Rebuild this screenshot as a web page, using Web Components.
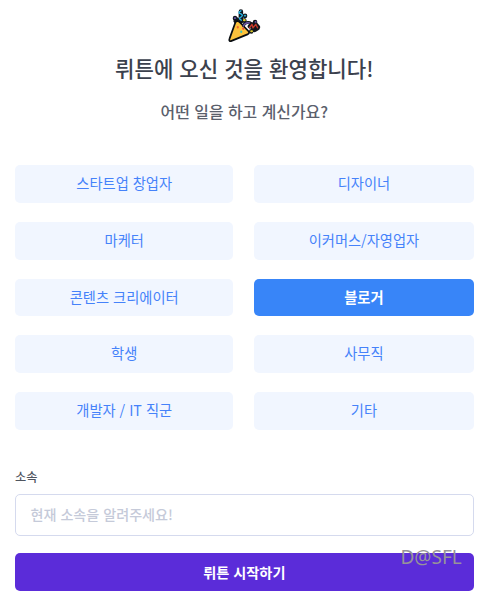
<!DOCTYPE html>
<html lang="ko">
<head>
<meta charset="utf-8">
<title>뤼튼</title>
<style>
  body {
    margin: 0;
    background: #fff;
    font-family: "Noto Sans CJK KR", "Noto Sans", sans-serif;
  }
</style>
</head>
<body>
<welcome-page>
  <party-icon slot="icon"></party-icon>
  <span slot="title">뤼튼에 오신 것을 환영합니다!</span>
  <span slot="question">어떤 일을 하고 계신가요?</span>
  <job-list>
    <job-option>스타트업 창업자</job-option>
    <job-option>디자이너</job-option>
    <job-option>마케터</job-option>
    <job-option>이커머스/자영업자</job-option>
    <job-option>콘텐츠 크리에이터</job-option>
    <job-option selected>블로거</job-option>
    <job-option>학생</job-option>
    <job-option>사무직</job-option>
    <job-option>개발자 / IT 직군</job-option>
    <job-option>기타</job-option>
  </job-list>
  <text-field hint="현재 소속을 알려주세요!">소속</text-field>
  <start-button>뤼튼 시작하기</start-button>
  <water-mark>D@SFL</water-mark>
</welcome-page>

<script>
class BaseElement extends HTMLElement {
  constructor() {
    super();
    const shadowRoot = this.attachShadow({mode: 'open'});
    shadowRoot.innerHTML = this.template;
  }
}

class WelcomePage extends BaseElement {
  get template() {
    return `<style>
      :host {
        display: flex;
        flex-direction: column;
        position: relative;
        box-sizing: border-box;
        height: 609px;
        padding: 7px 26.4px 0 15px;
      }
      header {
        display: flex;
        flex-direction: column;
        align-items: center;
        height: 158.3px;
      }
      h1, p {
        margin: 0;
        white-space: nowrap;
        font-weight: 500;
      }
      h1 {
        margin-top: 9px;
        font-size: 21.15px;
        line-height: 32px;
        color: #3b414d;
      }
      p {
        margin-top: 15px;
        font-size: 15.9px;
        line-height: 25px;
        color: #5a606c;
      }
    </style>
    <header>
      <slot name="icon"></slot>
      <h1><slot name="title"></slot></h1>
      <p><slot name="question"></slot></p>
    </header>
    <slot></slot>`;
  }
}
window.customElements.define('welcome-page', WelcomePage);

class PartyIcon extends BaseElement {
  get template() {
    return `<style>
      :host { display: block; width: 36px; height: 36px; }
      svg { display: block; }
    </style>
    <svg width="36" height="36" viewBox="34 22 104 104" fill="none" stroke-linecap="round" stroke-linejoin="round">
      <g stroke="#10161c" stroke-width="13">
        <path d="M60 54v1M77 35v28M89 47v1M87 61v1M65 58l-3 4"/>
        <path d="M103 78l5-6 4 10 7-10 7 8M118 65v1M107 92v1M125 83l-8 5"/>
      </g>
      <path d="M66 63c-3 0-4 2-5 4L44 114c-2 5 1 8 6 6l46-19c5-2 6-5 3-9L75 67c-3-3-6-5-9-4z" fill="#fdc23c" stroke="#090d12" stroke-width="5"/>
      <path d="M84 76c4-8 11-11 19-9" stroke="#10161c" stroke-width="8"/>
      <path d="M84 77c4-8 11-11 18-9" stroke="#6b57a5" stroke-width="4"/>
      <path d="M77 33c-8 4-7 7 0 9 6 3 5 6 0 9-6 2-5 6 1 9" stroke="#2bb8e6" stroke-width="4"/>
      <path d="M102 82l7-10 3 10 8-10 5 10" stroke="#c3392b" stroke-width="4"/>
      <path d="M59 54h2M119 65h1" stroke="#6554a8" stroke-width="5"/>
      <path d="M88 47h2" stroke="#2fa8c8" stroke-width="5"/>
      <path d="M86 60h2M107 92h2" stroke="#d9c92a" stroke-width="6"/>
      <path d="M68 80v1" stroke="#f0672e" stroke-width="6"/>
      <path d="M84 84v1" stroke="#e84d3c" stroke-width="6"/>
      <path d="M78 93v1" stroke="#43c7b5" stroke-width="6"/>
    </svg>`;
  }
}
window.customElements.define('party-icon', PartyIcon);

class JobList extends BaseElement {
  get template() {
    return `<style>
      :host {
        display: grid;
        grid-template-columns: 218.4px 1fr;
        grid-auto-rows: 37.7px;
        gap: 19px 20.8px;
      }
    </style>
    <slot></slot>`;
  }
}
window.customElements.define('job-list', JobList);

class JobOption extends BaseElement {
  get template() {
    return `<style>
      :host {
        display: flex;
        align-items: center;
        justify-content: center;
        box-sizing: border-box;
        padding-bottom: 2px;
        border-radius: 5px;
        background: #f1f6ff;
        color: #4582fa;
        font-size: 14.25px;
        line-height: 20px;
        cursor: pointer;
      }
      :host([selected]) {
        background: #3885f8;
        color: #fff;
        font-weight: 700;
      }
    </style>
    <slot></slot>`;
  }
}
window.customElements.define('job-option', JobOption);

class TextField extends BaseElement {
  get template() {
    return `<style>
      :host { display: block; margin-top: 38px; }
      label {
        display: block;
        font-size: 12.2px;
        line-height: 18px;
        font-weight: 500;
        color: #50555f;
      }
      .box {
        display: flex;
        align-items: center;
        box-sizing: border-box;
        height: 42px;
        margin-top: 8px;
        padding: 0 14.5px 1px;
        border: 1px solid #d5daee;
        border-radius: 5px;
        color: #c5cad9;
        font-size: 14.1px;
        font-weight: 500;
        line-height: 20px;
      }
    </style>
    <label><slot></slot></label>
    <div class="box"></div>`;
  }

  connectedCallback() {
    this.shadowRoot.querySelector('.box').textContent = this.getAttribute('hint');
  }
}
window.customElements.define('text-field', TextField);

class StartButton extends BaseElement {
  get template() {
    return `<style>
      :host {
        display: flex;
        align-items: center;
        justify-content: center;
        box-sizing: border-box;
        height: 38.6px;
        margin-top: 17px;
        border-radius: 5px;
        background: #5b2cd9;
        color: #fff;
        font-size: 14.2px;
        line-height: 20px;
        font-weight: 700;
      }
    </style>
    <slot></slot>`;
  }
}
window.customElements.define('start-button', StartButton);

// lies over the corner of the start button
class WaterMark extends BaseElement {
  get template() {
    return `<style>
      :host {
        position: absolute;
        left: 400.5px;
        top: 545px;
        font: 19px/24px "Noto Sans", sans-serif;
        color: #979399;
      }
    </style>
    <slot></slot>`;
  }
}
window.customElements.define('water-mark', WaterMark);
</script>
</body>
</html>
